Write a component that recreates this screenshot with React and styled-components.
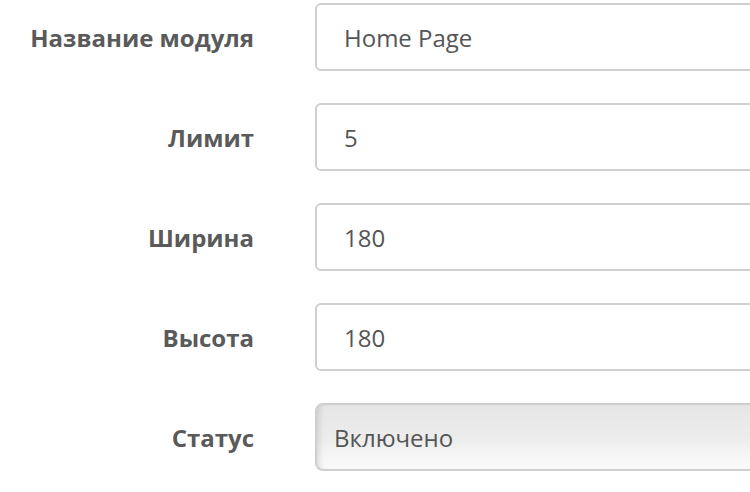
import React from 'react';
import styled, { createGlobalStyle } from 'styled-components';

const GlobalStyle = createGlobalStyle`
  html, body {
    margin: 0;
    padding: 0;
    background: #fff;
    overflow: hidden;
  }
  body {
    font-family: "Open Sans", "Noto Sans", sans-serif;
  }
`;

const Form = styled.form`
  display: flex;
  flex-direction: column;
  gap: 32px;
  padding-top: 3px;
  width: 1100px;
`;

const Row = styled.div`
  display: grid;
  grid-template-columns: 285px 1fr;
  align-items: center;
`;

const Label = styled.label`
  padding-right: 31px;
  text-align: right;
  font-size: 24px;
  font-weight: 700;
  color: #5a5a5a;
  white-space: nowrap;
`;

const Field = styled.div`
  padding-left: 30px;
`;

const Input = styled.input`
  box-sizing: border-box;
  display: block;
  width: 100%;
  height: 68px;
  padding: 0 27px;
  border: 2px solid #cfcfcf;
  border-radius: 6px;
  background: #fff;
  font-family: "Open Sans", "Noto Sans", sans-serif;
  font-size: 24px;
  color: #555;
  outline: none;
`;

const Select = styled.div`
  box-sizing: border-box;
  display: flex;
  align-items: center;
  height: 68px;
  padding: 0 17px;
  border: 2px solid #cfcfcf;
  border-radius: 8px;
  background: linear-gradient(to bottom, #e6e6e6 0%, #ececec 50%, #fbfbfb 100%);
  box-shadow: inset 6px 0 6px -4px rgba(0, 0, 0, 0.12);
  font-size: 24px;
  color: #555;
`;

const fields = [
  { label: 'Название модуля', value: 'Home Page' },
  { label: 'Лимит', value: '5' },
  { label: 'Ширина', value: '180' },
  { label: 'Высота', value: '180' },
];

export default function App() {
  return (
    <>
      <GlobalStyle />
      <Form>
        {fields.map((f) => (
          <Row key={f.label}>
            <Label>{f.label}</Label>
            <Field>
              <Input defaultValue={f.value} />
            </Field>
          </Row>
        ))}
        <Row>
          <Label>Статус</Label>
          <Field>
            <Select>Включено</Select>
          </Field>
        </Row>
      </Form>
    </>
  );
}
